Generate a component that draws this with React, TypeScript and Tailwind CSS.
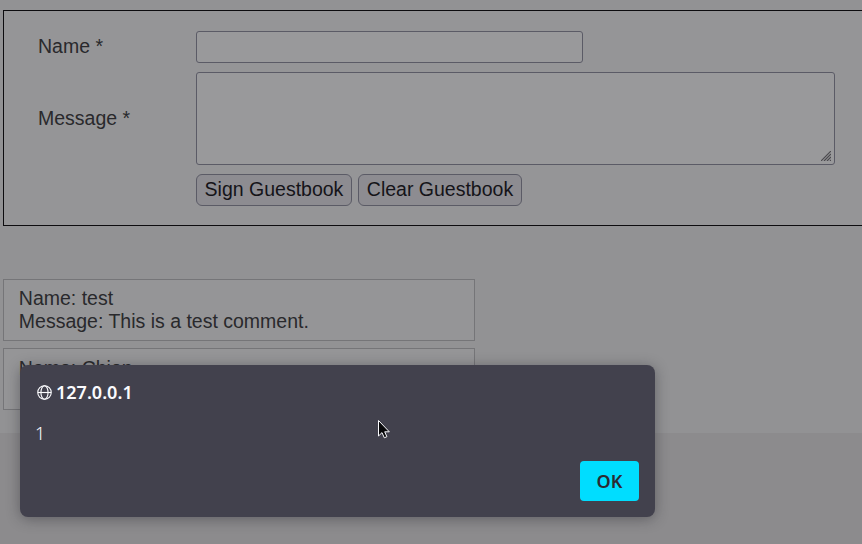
const entries = [
  { name: "test", message: "This is a test comment." },
  { name: "Chien" },
];

const fieldClass = "block border border-[#5b5b66] bg-[#99999b] rounded-[3px] outline-none";
const buttonClass =
  "h-8 rounded-[6px] border border-[#5b5b66] bg-[#8d8c91] pb-0.5 text-center text-[19.5px] leading-[28px] text-[#151419] whitespace-nowrap";

function GuestbookForm() {
  return (
    <form className="ml-[3px] h-[216px] w-[900px] border border-[#0d0c0f] bg-[#959597] pl-[34px] pt-5">
      <div className="flex h-8 items-center">
        <label className="w-[158px] pb-px">Name *</label>
        <input aria-label="Name" className={`${fieldClass} h-8 w-[387px]`} />
      </div>
      <div className="mt-[9px] flex h-[93px] items-center">
        <label className="w-[158px]">Message *</label>
        <div className={`${fieldClass} flex h-[93px] w-[639px] items-end justify-end pb-[3px] pr-[3px]`}>
          <svg width="10" height="10" viewBox="0 0 10 10" stroke="#4b4a4e" strokeWidth="1.2" fill="none">
            <path d="M0 10L10 0M3 10L10 3M6 10L10 6M9 10L10 9" />
          </svg>
        </div>
      </div>
      <div className="mt-[9px] flex gap-[6px] pl-[158px]">
        <button type="button" className={`${buttonClass} w-[156px]`}>Sign Guestbook</button>
        <button type="button" className={`${buttonClass} w-[164px]`}>Clear Guestbook</button>
      </div>
    </form>
  );
}

function AlertDialog() {
  return (
    <div
      role="alertdialog"
      className="absolute left-5 top-[365px] flex h-[152px] w-[635px] flex-col rounded-[8px] bg-[#42414d] px-4 py-4 font-['Noto_Sans',sans-serif] text-[#fbfbfe] shadow-[0_2px_14px_rgba(28,27,34,0.4)]"
    >
      <div className="flex h-[23px] items-center gap-1">
        <svg className="ml-px -mt-px" width="15" height="15" viewBox="0 0 16 16" fill="none" stroke="currentColor" strokeWidth="1.2">
          <circle cx="8" cy="8" r="7.2" />
          <ellipse cx="8" cy="8" rx="3.8" ry="7.2" />
          <path d="M1 8H15" />
        </svg>
        <span className="text-[18px] font-semibold leading-[23px]">127.0.0.1</span>
      </div>
      <p className="-ml-px mt-[17px] h-6 text-[18px] font-light leading-6">1</p>
      <button
        type="button"
        className="mt-auto h-10 w-[59px] self-end rounded-[4px] bg-[#00ddff] text-[18px] font-semibold leading-10 text-[#2b2a33]"
      >
        OK
      </button>
    </div>
  );
}

export default function App() {
  return (
    <div className="relative h-[544px] w-[862px] overflow-hidden bg-[#8c8b8d] font-['Liberation_Sans',Arial,sans-serif] text-[19.5px] leading-[23px] text-[#29292c]">
      <main className="h-[433px] bg-[#929294] pt-[10px]">
        <GuestbookForm />
        <div className="ml-[3px] mt-[53px] flex w-[472px] flex-col gap-[7px]">
          {entries.map((entry) => (
            <div key={entry.name} className="h-[62px] border border-[#757578] bg-[#959597] pl-[14.8px] pt-[7px] last:pt-2">
              <div>Name: {entry.name}</div>
              {entry.message && <div>Message: {entry.message}</div>}
            </div>
          ))}
        </div>
      </main>
      <AlertDialog />
      <svg className="absolute left-[377px] top-[419px]" width="14" height="21" viewBox="0 0 14 21">
        <path
          d="M1.5 1.5V17L5 13.6L7.3 18.8L9.9 17.7L7.7 12.8H12.3Z"
          fill="#08080a"
          stroke="#fbfbfe"
          strokeWidth="1"
        />
      </svg>
    </div>
  );
}
